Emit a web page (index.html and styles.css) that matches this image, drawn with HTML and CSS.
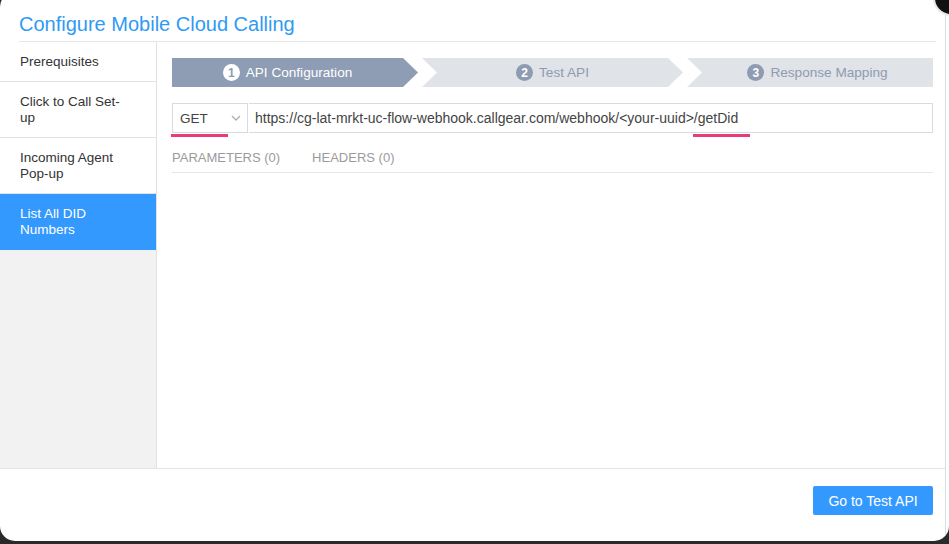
FILE: index.html
```html
<!DOCTYPE html>
<html>
<head>
<meta charset="utf-8">
<link rel="stylesheet" href="styles.css">
</head>
<body>
<div class="modal">
  <div class="sheet">
    <div class="header"><h1 class="title">Configure Mobile Cloud Calling</h1></div>
    <div class="main">
      <nav class="sidebar">
        <div class="nav-item">Prerequisites</div>
        <div class="nav-item">Click to Call Set-up</div>
        <div class="nav-item">Incoming Agent Pop-up</div>
        <div class="nav-item active">List All DID Numbers</div>
      </nav>
      <section class="content">
        <div class="stepper">
          <div class="step step-first current"><span class="num">1</span>API Configuration</div>
          <div class="step step-mid"><span class="num">2</span>Test API</div>
          <div class="step step-last"><span class="num">3</span>Response Mapping</div>
        </div>
        <div class="request">
          <div class="method">GET
            <svg class="chev" width="10" height="6" viewBox="0 0 10 6"><path d="M1 1l4 4 4-4" fill="none" stroke="#a9adb3" stroke-width="1.3"/></svg>
          </div>
          <div class="url">https://cg-lat-mrkt-uc-flow-webhook.callgear.com/webhook/&lt;your-uuid&gt;/getDid</div>
          <span class="mark mark-get"></span>
          <span class="mark mark-did"></span>
        </div>
        <div class="tabs">
          <span class="tab">PARAMETERS (0)</span>
          <span class="tab">HEADERS (0)</span>
        </div>
      </section>
    </div>
    <div class="footer"><button class="btn">Go to Test API</button></div>
  </div>
</div>
<div class="close"></div>
</body>
</html>
```
FILE: styles.css
```css
html, body { margin: 0; padding: 0; }
body {
  width: 949px;
  height: 544px;
  overflow: hidden;
  background: #2a2a2a;
  font-family: "Liberation Sans", Arial, Helvetica, sans-serif;
  color: #333;
  position: relative;
}
.modal {
  margin-top: -8px;
  width: 949px;
  height: 549px;
  background: #fff;
  border-radius: 15px;
  box-sizing: border-box;
  padding-right: 3px;
  overflow: hidden;
}
.sheet {
  height: 100%;
  border-right: 1px solid #dcdcdc;
  display: flex;
  flex-direction: column;
}
.header {
  margin: 0 9px 0 19px;
  padding: 20px 0 5px;
  border-bottom: 1px solid #e6e6e6;
}
.title {
  margin: 0;
  font-size: 20px;
  line-height: 24px;
  font-weight: normal;
  color: #2f9af3;
}
.main {
  display: flex;
  height: 426px;
  border-bottom: 1px solid #e4e4e4;
}
.sidebar {
  width: 156px;
  background: #f2f2f2;
  border-right: 1px solid #e2e2e2;
  flex: none;
}
.nav-item {
  background: #fff;
  padding: 12px 28px 11px 20px;
  font-size: 13.5px;
  line-height: 16px;
  border-bottom: 1px solid #e2e2e2;
  color: #333;
}
.nav-item.active {
  background: #3399ff;
  color: #fff;
  border-bottom-color: #3399ff;
}
.content {
  flex: 1;
  padding: 16px 12px 0 15px;
}
.stepper {
  display: flex;
  gap: 4px;
  height: 29px;
}
.step {
  flex: 1;
  display: flex;
  align-items: center;
  justify-content: center;
  background: #e0e3e8;
  color: #8f9bb1;
  font-size: 13.6px;
}
.step.current { background: #8e9cb4; color: #fff; }
.step-first {
  padding-right: 15px;
  clip-path: polygon(0 0, calc(100% - 15px) 0, 100% 50%, calc(100% - 15px) 100%, 0 100%);
}
.step-mid {
  padding: 0 15px;
  clip-path: polygon(0 0, calc(100% - 15px) 0, 100% 50%, calc(100% - 15px) 100%, 0 100%, 15px 50%);
}
.step-last {
  padding-left: 15px;
  clip-path: polygon(0 0, 100% 0, 100% 100%, 0 100%, 15px 50%);
}
.num {
  width: 17px;
  height: 17px;
  border-radius: 50%;
  background: #8f9bb1;
  color: #fff;
  font-size: 12px;
  font-weight: bold;
  display: inline-flex;
  align-items: center;
  justify-content: center;
  margin-right: 6px;
}
.current .num { background: #fff; color: #8e9cb4; }
.request {
  position: relative;
  display: flex;
  margin-top: 16px;
  height: 30px;
}
.method {
  width: 76px;
  box-sizing: border-box;
  border: 1px solid #d8dce1;
  display: flex;
  align-items: center;
  justify-content: space-between;
  padding: 0 6px 0 7px;
  font-size: 13.5px;
  color: #444;
}
.url {
  flex: 1;
  border: 1px solid #d8dce1;
  border-left: none;
  margin-left: 1px;
  display: flex;
  align-items: center;
  padding-left: 6px;
  font-size: 14px;
  color: #444;
  white-space: nowrap;
}
.mark {
  position: absolute;
  top: 31px;
  height: 3px;
  width: 57px;
  background: #ea3a7a;
}
.mark-get { left: -1px; }
.mark-did { left: 521px; }
.tabs {
  margin-top: 17px;
  padding-bottom: 7px;
  border-bottom: 1px solid #e6e6e6;
  display: flex;
  gap: 32px;
}
.tab {
  font-size: 13px;
  line-height: 15px;
  color: #9b9b9b;
}
.footer {
  flex: 1;
  display: flex;
  justify-content: flex-end;
  align-items: flex-start;
  padding: 17px 12px 0 0;
}
.btn {
  width: 120px;
  height: 29px;
  border: none;
  border-radius: 2px;
  background: #3399ff;
  color: #fff;
  font-family: "Liberation Sans", Arial, sans-serif;
  font-size: 14px;
  padding: 0;
}
.close {
  position: absolute;
  left: 933px;
  top: -20px;
  width: 32px;
  height: 32px;
  border-radius: 50%;
  background: #111;
  border: 2px solid #e8e8e8;
}
```
